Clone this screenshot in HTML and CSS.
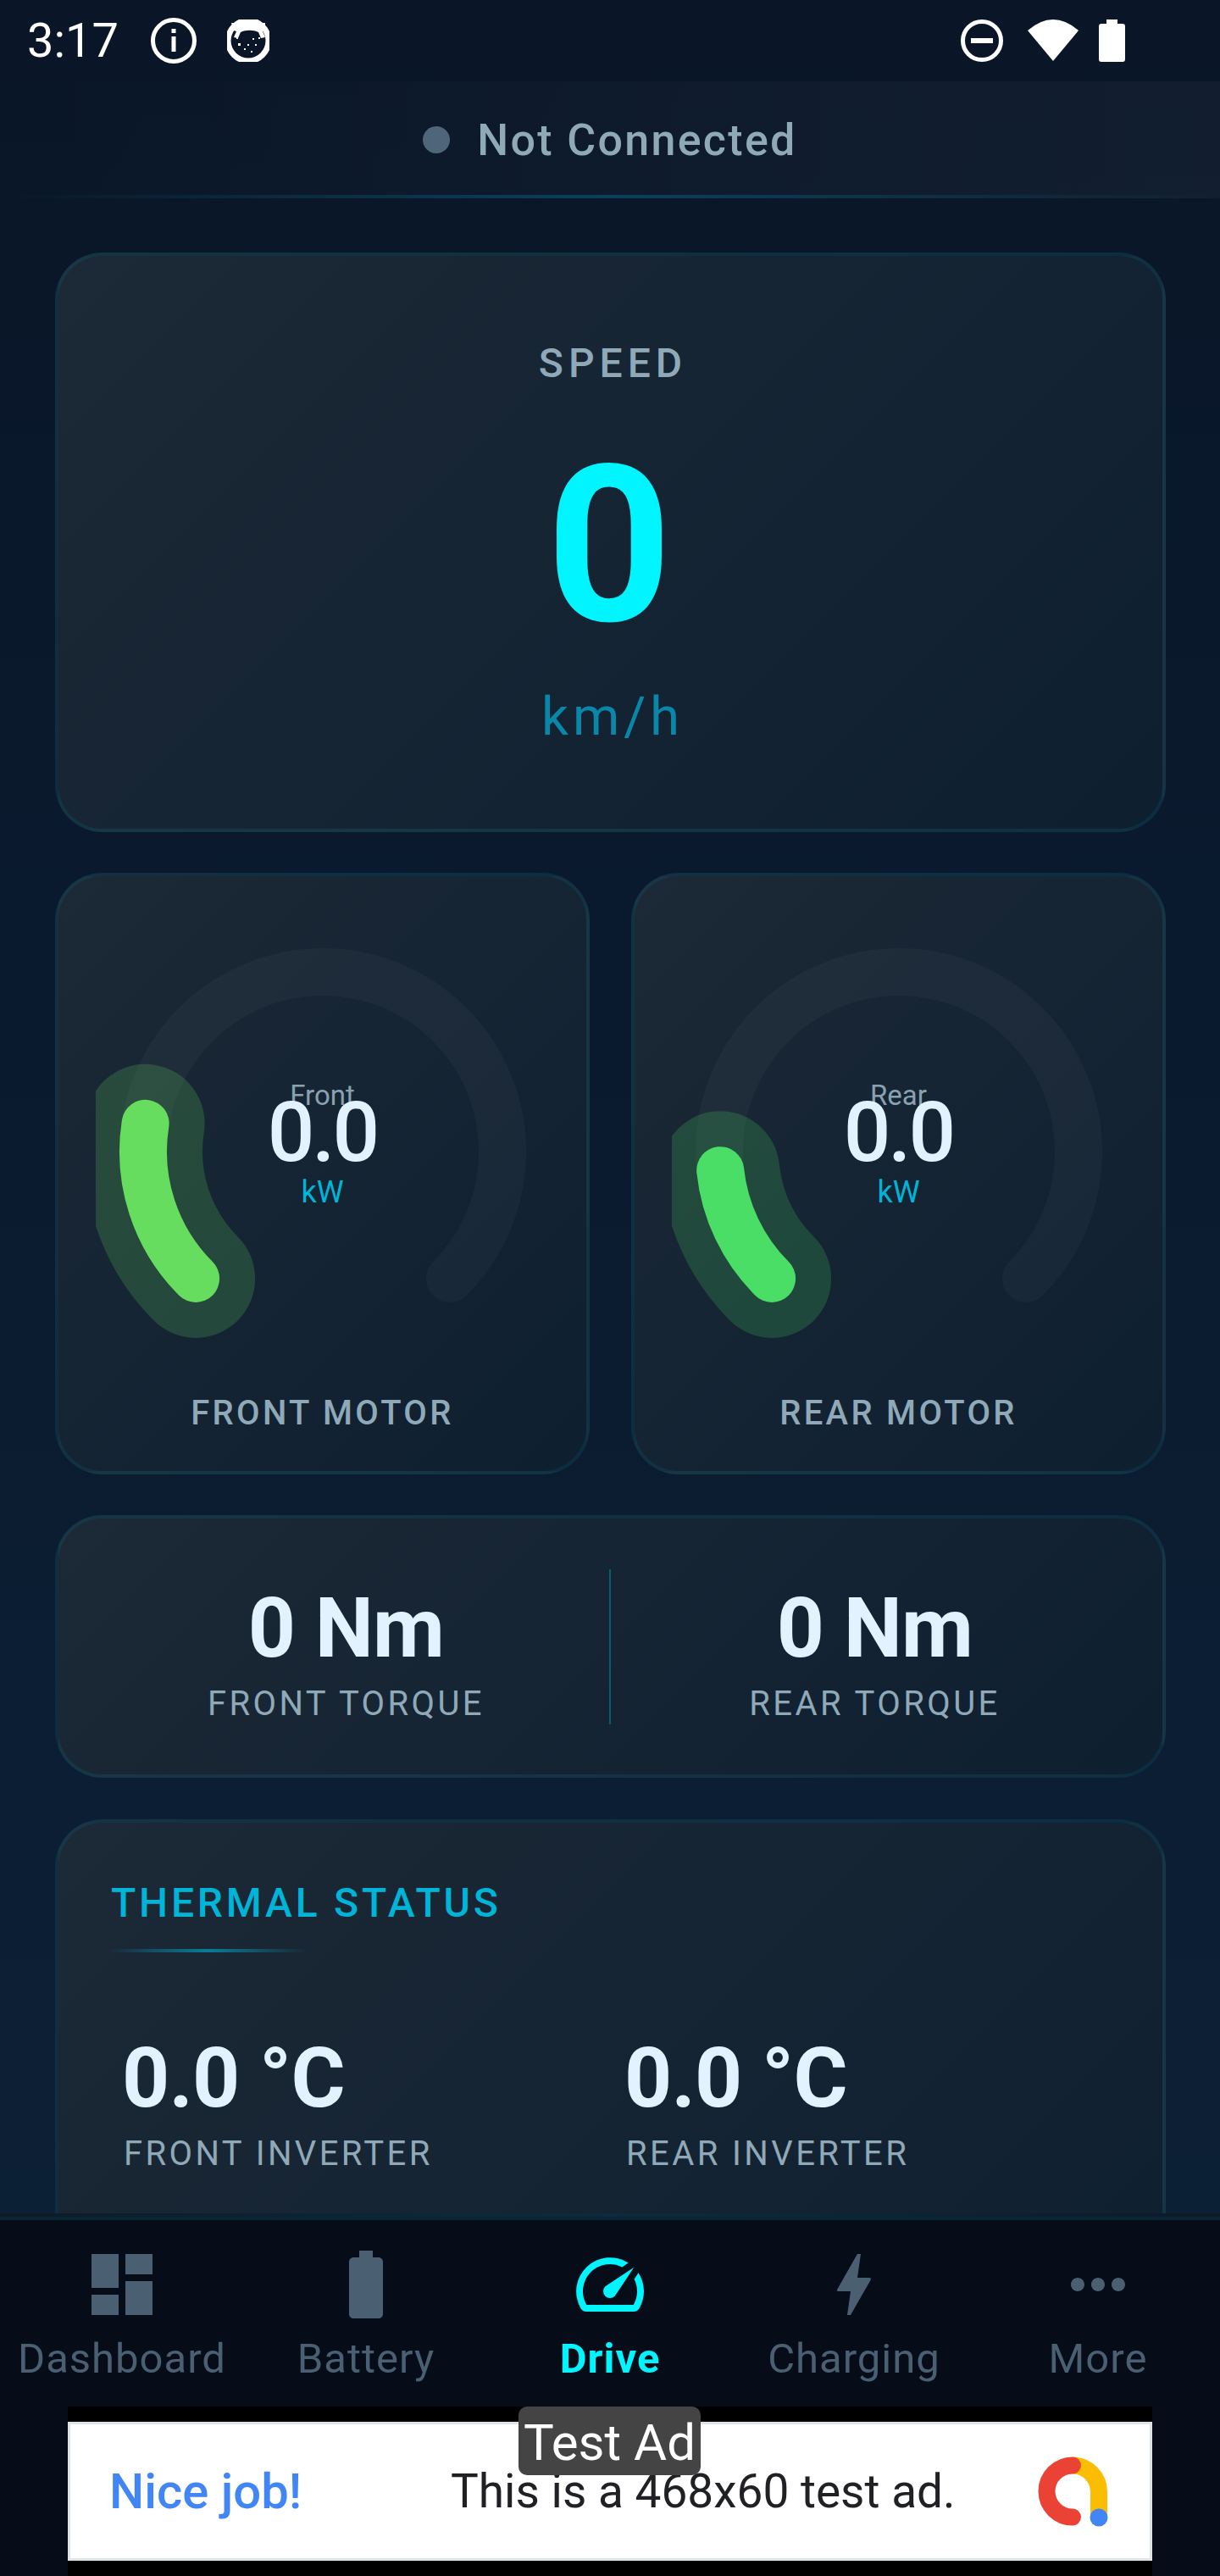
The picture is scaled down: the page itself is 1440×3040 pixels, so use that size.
FILE: index.html
```html
<!DOCTYPE html>
<html lang="en">
<head>
    <meta charset="UTF-8">
    <meta name="viewport" content="width=device-width, initial-scale=1.0">
    <link rel="stylesheet" href="styles.css">
    <title>Drive</title>
</head>
<body>
    <div class="status-bar">
        <span class="clock">3:17</span>
        <svg class="icon-info" viewBox="0 0 54 54">
            <circle cx="27" cy="27" r="24.5" fill="none" stroke="#fff" stroke-width="5"/>
            <rect x="24.5" y="13" width="5" height="5" fill="#fff"/>
            <rect x="24.5" y="22" width="5" height="18" fill="#fff"/>
        </svg>
        <svg class="icon-cat" viewBox="0 0 50 50">
            <circle cx="25" cy="25" r="25" fill="#fff"/>
            <circle cx="25" cy="25" r="20.5" fill="#0a1628"/>
            <path d="M5 4h40v9l-3 1 3 7-5 1-3-7c-6-3-15-3-21 0l-3 7-5-1 3-7-3-1z" fill="#fff"/>
            <circle cx="25" cy="25" r="25" fill="none" stroke="#fff" stroke-width="4.5"/>
            <g fill="#fff">
                <rect x="13" y="28" width="3" height="3"/>
                <rect x="30" y="22" width="2" height="2"/>
                <rect x="37" y="21" width="2" height="2"/>
                <rect x="24" y="29" width="2" height="2"/>
                <rect x="20" y="34" width="2" height="2"/>
                <rect x="33" y="29" width="2" height="2"/>
                <rect x="28" y="37" width="2" height="2"/>
                <rect x="11" y="21" width="2" height="2"/>
            </g>
        </svg>
        <div class="status-right">
            <svg class="icon-dnd" viewBox="0 0 50 50">
                <circle cx="25" cy="25" r="22.5" fill="none" stroke="#fff" stroke-width="5"/>
                <rect x="12" y="22" width="26" height="6" fill="#fff"/>
            </svg>
            <svg class="icon-wifi" viewBox="0 0 60 50">
                <path d="M30 49L0 13Q30 -13 60 13Z" fill="#fff"/>
            </svg>
            <svg class="icon-batt" viewBox="0 0 31 50">
                <path d="M9 0h13v5h6a3 3 0 0 1 3 3v39a3 3 0 0 1-3 3H3a3 3 0 0 1-3-3V8a3 3 0 0 1 3-3h6z" fill="#fff"/>
            </svg>
        </div>
    </div>

    <div class="conn-header">
        <span class="conn-dot"></span>
        <span class="conn-text">Not Connected</span>
    </div>

    <div class="scroll-area">
        <div class="card speed-card">
            <div class="speed-label">SPEED</div>
            <div class="speed-value">0</div>
            <div class="speed-unit">km/h</div>
        </div>

        <div class="motor-row">
            <div class="card motor-card">
                <div class="gauge">
                    <svg class="gauge-svg" viewBox="0 0 536 536">
                        <path d="M118.1 417.9A212 212 0 1 1 417.9 417.9" class="gauge-track"/>
                        <path d="M118.1 417.9A212 212 0 0 1 58.6 234.8" class="gauge-glow front-arc"/>
                        <path d="M118.1 417.9A212 212 0 0 1 58.6 234.8" class="gauge-arc front-arc"/>
                    </svg>
                    <div class="gauge-text">
                        <div class="gauge-name">Front</div>
                        <div class="gauge-value">0.0</div>
                        <div class="gauge-unit">kW</div>
                    </div>
                </div>
                <div class="motor-label">FRONT MOTOR</div>
            </div>
            <div class="card motor-card">
                <div class="gauge">
                    <svg class="gauge-svg" viewBox="0 0 536 536">
                        <path d="M118.1 417.9A212 212 0 1 1 417.9 417.9" class="gauge-track"/>
                        <path d="M118.1 417.9A212 212 0 0 1 57.2 290.2" class="gauge-glow rear-arc"/>
                        <path d="M118.1 417.9A212 212 0 0 1 57.2 290.2" class="gauge-arc rear-arc"/>
                    </svg>
                    <div class="gauge-text">
                        <div class="gauge-name">Rear</div>
                        <div class="gauge-value">0.0</div>
                        <div class="gauge-unit">kW</div>
                    </div>
                </div>
                <div class="motor-label">REAR MOTOR</div>
            </div>
        </div>

        <div class="card torque-card">
            <div class="torque-col">
                <div class="big-value">0 Nm</div>
                <div class="small-label">FRONT TORQUE</div>
            </div>
            <div class="torque-divider"></div>
            <div class="torque-col">
                <div class="big-value">0 Nm</div>
                <div class="small-label">REAR TORQUE</div>
            </div>
        </div>

        <div class="card thermal-card">
            <div class="thermal-title">THERMAL STATUS</div>
            <div class="thermal-rule"></div>
            <div class="thermal-grid">
                <div class="thermal-item">
                    <div class="big-value">0.0 °C</div>
                    <div class="small-label">FRONT INVERTER</div>
                </div>
                <div class="thermal-item">
                    <div class="big-value">0.0 °C</div>
                    <div class="small-label">REAR INVERTER</div>
                </div>
            </div>
        </div>
    </div>

    <div class="nav-line"></div>
    <div class="bottom-nav">
        <div class="nav-item">
            <svg class="nav-icon" viewBox="0 0 24 24"><path d="M3 13h8V3H3v10zm0 8h8v-6H3v6zm10 0h8V11h-8v10zm0-18v6h8V3h-8z"/></svg>
            <span class="nav-text">Dashboard</span>
        </div>
        <div class="nav-item">
            <svg class="nav-icon" viewBox="0 0 24 24"><path d="M15.67 4H14V2h-4v2H8.33C7.6 4 7 4.6 7 5.33v15.33C7 21.4 7.6 22 8.33 22h7.33c.74 0 1.34-.6 1.34-1.33V5.33C17 4.6 16.4 4 15.67 4z"/></svg>
            <span class="nav-text">Battery</span>
        </div>
        <div class="nav-item active">
            <svg class="nav-icon" viewBox="0 0 24 24"><path d="M20.38 8.57l-1.23 1.85a8 8 0 0 1-.22 7.58H5.07A8 8 0 0 1 15.58 6.85l1.85-1.23A10 10 0 0 0 3.35 19a2 2 0 0 0 1.72 1h13.85a2 2 0 0 0 1.74-1 10 10 0 0 0-.27-10.44z"/><path d="M10.59 15.41a2 2 0 0 0 2.83 0l5.66-8.49-8.49 5.66a2 2 0 0 0 0 2.83z"/></svg>
            <span class="nav-text">Drive</span>
        </div>
        <div class="nav-item">
            <svg class="nav-icon" viewBox="0 0 24 24"><path d="M11 21h-1l1-7H7.5c-.58 0-.57-.32-.38-.66s.05-.08.07-.12C8.48 10.94 10.42 7.54 13 3h1l-1 7h3.5c.49 0 .56.33.47.51l-.07.15C12.96 17.55 11 21 11 21z"/></svg>
            <span class="nav-text">Charging</span>
        </div>
        <div class="nav-item">
            <svg class="nav-icon" viewBox="0 0 24 24"><path d="M6 10c-1.1 0-2 .9-2 2s.9 2 2 2 2-.9 2-2-.9-2-2-2zm12 0c-1.1 0-2 .9-2 2s.9 2 2 2 2-.9 2-2-.9-2-2-2zm-6 0c-1.1 0-2 .9-2 2s.9 2 2 2 2-.9 2-2-.9-2-2-2z"/></svg>
            <span class="nav-text">More</span>
        </div>
    </div>

    <div class="ad-wrap">
        <div class="ad-frame">
            <div class="ad-tag">Test Ad</div>
            <div class="ad-banner">
                <span class="ad-nice">Nice job!</span>
                <span class="ad-copy">This is a 468x60 test ad.</span>
                <svg class="ad-logo" viewBox="0 0 92 92">
                    <path d="M47 10.500a31 31 0 0 1 31 31V72" fill="none" stroke="#fbbc04" stroke-width="20"/>
                    <path d="M47 10.500a30.500 30.500 0 0 0 0 61" fill="none" stroke="#ea4335" stroke-width="20" stroke-linecap="round"/>
                    <circle cx="78" cy="72" r="10.500" fill="#4285f4"/>
                </svg>
            </div>
        </div>
    </div>
</body>
</html>
```
FILE: styles.css
```css
html, body {
    margin: 0;
    padding: 0;
}
body {
    width: 1440px;
    height: 3040px;
    overflow: hidden;
    display: flex;
    flex-direction: column;
    background: linear-gradient(180deg, #0a1628 0%, #0a1a2e 40%, #0d2238 100%);
    font-family: "Roboto", sans-serif;
    color: #fff;
}

/* status bar */
.status-bar {
    height: 96px;
    flex: none;
    display: flex;
    align-items: center;
    padding: 0 112px 0 32px;
}
.clock {
    font-size: 56px;
    width: 105px;
}
.icon-info {
    width: 54px;
    height: 54px;
    margin-left: 41px;
}
.icon-cat {
    width: 50px;
    height: 50px;
    margin-left: 36px;
}
.status-right {
    margin-left: auto;
    display: flex;
    align-items: center;
}
.icon-dnd {
    width: 50px;
    height: 50px;
}
.icon-wifi {
    width: 60px;
    height: 50px;
    margin-left: 29px;
}
.icon-batt {
    width: 31px;
    height: 50px;
    margin-left: 24px;
}

/* connection header */
.conn-header {
    position: relative;
    height: 138px;
    flex: none;
    display: flex;
    align-items: center;
    justify-content: center;
    background: linear-gradient(90deg, rgba(255,255,255,0), rgba(255,255,255,0.035));
}
.conn-header::after {
    content: "";
    position: absolute;
    left: 0;
    right: 0;
    bottom: 0;
    height: 4px;
    background: linear-gradient(90deg, rgba(0,180,216,0), rgba(0,180,216,0.25), rgba(0,180,216,0));
}
.conn-dot {
    width: 32px;
    height: 32px;
    border-radius: 50%;
    background: #4f6579;
    margin-right: 32px;
}
.conn-text {
    font-size: 52px;
    font-weight: 500;
    letter-spacing: 2.300px;
    color: #8fa9b8;
}

/* scrolling content */
.scroll-area {
    flex: 1;
    min-height: 0;
    overflow: hidden;
    padding: 64px 64px 0 65px;
    display: flex;
    flex-direction: column;
    gap: 48px;
}
.card {
    box-sizing: border-box;
    flex: none;
    border: 4px solid rgba(0,180,216,0.1);
    border-radius: 56px;
    background: linear-gradient(135deg, #1c2936 0%, #0e1f30 100%);
}

.speed-card {
    height: 684px;
    display: flex;
    flex-direction: column;
    align-items: center;
    padding-top: 99px;
}
.speed-label {
    font-size: 48px;
    line-height: 56px;
    font-weight: 500;
    letter-spacing: 6px;
    margin-right: -6px;
    color: #8fa9b8;
}
.speed-value {
    font-size: 258px;
    line-height: 252px;
    font-weight: 700;
    color: #00f5ff;
    margin-top: 61px;
    margin-right: 3px;
}
.speed-unit {
    font-size: 63px;
    line-height: 70px;
    letter-spacing: 5px;
    margin-right: -5px;
    color: #0a87a8;
    margin-top: 41px;
}

/* motor gauges */
.motor-row {
    display: flex;
    gap: 49px;
    flex: none;
}
.motor-card {
    flex: 1;
    height: 710px;
    display: flex;
    flex-direction: column;
    align-items: center;
    padding-top: 57px;
}
.gauge {
    position: relative;
    width: 536px;
    height: 536px;
}
.gauge-svg {
    display: block;
    width: 536px;
    height: 536px;
    overflow: hidden;
}
.gauge-track, .gauge-glow, .gauge-arc {
    fill: none;
    stroke-linecap: round;
}
.gauge-track {
    stroke: rgba(255,255,255,0.03);
    stroke-width: 56;
}
.gauge-glow {
    stroke-width: 140;
    opacity: 0.2;
}
.gauge-arc {
    stroke-width: 56;
}
.front-arc {
    stroke: #66dd5e;
}
.rear-arc {
    stroke: #4ade66;
}
.gauge-text {
    position: absolute;
    left: 0;
    right: 0;
    top: 186px;
    display: flex;
    flex-direction: column;
    align-items: center;
}
.gauge-name {
    font-size: 33px;
    line-height: 32px;
    color: #8aa1af;
}
.gauge-value {
    font-size: 98px;
    line-height: 60px;
    font-weight: 500;
    letter-spacing: -3px;
    margin-top: -2px;
    color: #e3f2ff;
}
.gauge-unit {
    font-size: 36px;
    line-height: 40px;
    color: #00b4d8;
    margin-top: 20px;
}
.motor-label {
    font-size: 40px;
    line-height: 46px;
    font-weight: 500;
    letter-spacing: 3.300px;
    color: #8fa9b8;
    margin-top: 18px;
}

/* torque */
.torque-card {
    height: 310px;
    display: flex;
    align-items: flex-start;
    padding: 60px 28px;
}
.torque-col {
    flex: 1;
    text-align: center;
    padding-top: 15px;
}
.torque-divider {
    width: 2px;
    height: 183px;
    margin-left: -1px;
    background: #0f5a72;
}
.big-value {
    font-size: 98px;
    line-height: 110px;
    font-weight: 700;
    letter-spacing: -0.800px;
    color: #e3f2ff;
}
.small-label {
    font-size: 40px;
    line-height: 46px;
    letter-spacing: 3.400px;
    color: #8fa9b8;
    margin-top: 11px;
}

/* thermal */
.thermal-card {
    min-height: 700px;
    margin-top: 1px;
    padding: 67px 62px 0;
}
.thermal-title {
    font-size: 48px;
    line-height: 56px;
    font-weight: 500;
    letter-spacing: 3.800px;
    color: #00b4d8;
}
.thermal-rule {
    width: 236px;
    height: 4px;
    margin-top: 26px;
    margin-left: -4px;
    background: linear-gradient(90deg, rgba(0,180,216,0), rgba(0,180,216,0.6), rgba(0,180,216,0));
}
.thermal-grid {
    display: grid;
    grid-template-columns: 593px 1fr;
    margin-top: 94px;
}
.thermal-item {
    padding-left: 13px;
}
.thermal-item .small-label {
    margin-left: 2px;
}

/* bottom nav */
.nav-line {
    height: 4px;
    flex: none;
    background: linear-gradient(90deg, #0d1a28, #0b2c3e, #0d1a28);
}
.bottom-nav {
    height: 224px;
    flex: none;
    box-sizing: border-box;
    border-top: 4px solid #0a2533;
    display: flex;
    background: #060d18;
}
.nav-item {
    flex: 1;
    display: flex;
    flex-direction: column;
    align-items: center;
    padding-top: 28px;
    color: #4a6072;
}
.nav-icon {
    width: 96px;
    height: 96px;
    fill: currentColor;
    display: block;
}
.nav-text {
    font-size: 49px;
    line-height: 56px;
    letter-spacing: 1px;
    margin-top: 12px;
}
.nav-item.active {
    color: #00f5ff;
}
.nav-item.active .nav-text {
    font-weight: 700;
}

/* test ad */
.ad-wrap {
    height: 200px;
    flex: none;
    background: #060d18;
    display: flex;
    justify-content: center;
}
.ad-frame {
    position: relative;
    width: 1280px;
    height: 200px;
    background: #000;
    padding-top: 18px;
    box-sizing: border-box;
}
.ad-tag {
    position: absolute;
    z-index: 2;
    left: 532px;
    top: 0;
    width: 215px;
    height: 81px;
    border-radius: 10px;
    background: #444;
    color: #fff;
    font-size: 60px;
    line-height: 85px;
    text-align: center;
}
.ad-banner {
    box-sizing: border-box;
    height: 164px;
    border: 3px solid #dfe4e8;
    background: #fff;
    display: flex;
    align-items: center;
    position: relative;
}
.ad-nice {
    font-size: 58px;
    font-weight: 500;
    color: #4285f4;
    margin-left: 46px;
    width: 403px;
}
.ad-copy {
    font-size: 55px;
    color: #202124;
}
.ad-logo {
    position: absolute;
    left: 1136px;
    top: 38px;
    width: 92px;
    height: 92px;
}
```
